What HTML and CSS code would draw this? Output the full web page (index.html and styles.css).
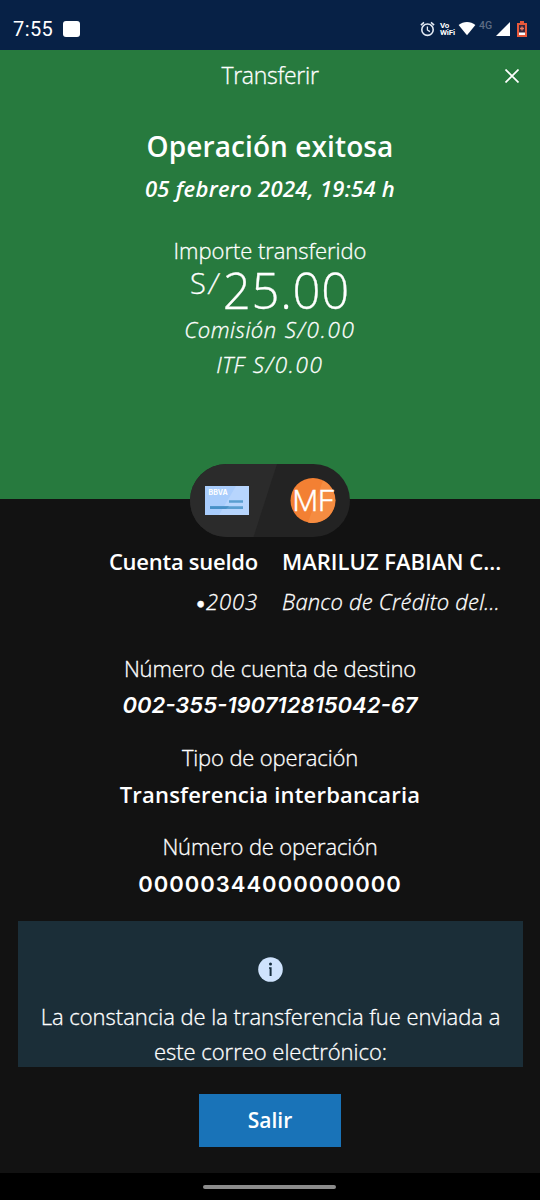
FILE: index.html
```html
<!DOCTYPE html>
<html lang="es">
<head>
<meta charset="utf-8">
<title>Transferir</title>
<link rel="stylesheet" href="styles.css">
</head>
<body>
<div class="screen">
  <div class="status">
    <span class="clock">7:55</span>
    <span class="notif"></span>
    <svg class="alarm" width="15" height="16" viewBox="0 0 15 16" fill="none" stroke="#e4ebf5">
      <circle cx="7.5" cy="8.7" r="5.7" stroke-width="1.6"/>
      <path d="M7.4 5.4V9l2.5 1.6" stroke-width="1.3"/>
      <path d="M.9 4.1 4 1.4M14.1 4.1 11 1.4" stroke-width="1.6"/>
    </svg>
    <span class="vowifi"><span>Vo</span><span>WiFi</span></span>
    <svg class="wifi" width="18" height="15" viewBox="0 0 18 15"><path d="M.6 4.1C5.4-.2 12.600-.2 17.400 4.100L9 14.200Z" fill="#fff"/></svg>
    <span class="net">4G</span>
    <svg class="signal" width="14" height="14" viewBox="0 0 14 14"><path d="M14 0v14H0z" fill="#fff"/></svg>
    <svg class="battery" width="10" height="16" viewBox="0 0 10 16">
      <path d="M3 0h4v2h3v14H0V2h3z" fill="#e8593b"/>
      <path d="M2 4h6v10H2z" fill="#38283d"/>
      <path d="M2 11.500h6V14H2z" fill="#fff"/>
      <path d="M5 5.500v4M3 7.500h4" stroke="#ef7b62" stroke-width="1.300"/>
    </svg>
  </div>

  <div class="hero">
    <div class="bar">
      <span></span>
      <span class="title">Transferir</span>
      <svg class="close" width="14" height="14" viewBox="0 0 14 14"><path d="m.5.5 13 13M13.500.5.5 13.500" stroke="#fff" stroke-width="1.700"/></svg>
    </div>
    <div class="success">Operación exitosa</div>
    <div class="date">05 febrero 2024, 19:54 h</div>
    <div class="label amount-label">Importe transferido</div>
    <div class="amount"><span class="currency">S<span class="slash">/</span></span><span class="value">25.00</span></div>
    <div class="fee"><span class="word">Comisión</span><span class="money">S/0.00</span></div>
    <div class="fee"><span class="word">ITF</span><span class="money">S/0.00</span></div>
  </div>

  <div class="pill">
    <svg width="160" height="73" viewBox="0 0 160 73">
      <rect width="160" height="73" rx="36.500" fill="#232323"/>
      <path d="M36.500 0H87L63.500 73h-27a36.500 36.500 0 0 1 0-73z" fill="#2b2b2b"/>
      <path d="M15 22h44v29H15z" fill="#a9cdfc"/>
      <path d="M46 22h13v29H29z" fill="#b7d5fd"/>
      <path d="M39 36.300h14v2.500H39zM20 42.200h33V45H20z" fill="#5a9ed0"/>
      <path d="M20 42.200h19L36 45H20z" fill="#4790c7"/>
      <circle cx="123" cy="36.500" r="22.500" fill="#f38033"/>
      <path d="M133 16.400a22.500 22.500 0 0 1-15 42z" fill="#f58c41"/>
      <text class="brand" x="18.500" y="31">BBVA</text>
      <text class="initials" x="123.500" y="46.500">MF</text>
    </svg>
  </div>

  <div class="parties">
    <div class="from">
      <div class="name">Cuenta sueldo</div>
      <div class="detail"><span class="dot">•</span>2003</div>
    </div>
    <div class="to">
      <div class="name">MARILUZ FABIAN C...</div>
      <div class="detail">Banco de Crédito del...</div>
    </div>
  </div>

  <div class="facts">
    <div class="fact">
      <div class="label tight">Número de cuenta de destino</div>
      <div class="data account">002-355-190712815042-67</div>
    </div>
    <div class="fact">
      <div class="label tight">Tipo de operación</div>
      <div class="data">Transferencia interbancaria</div>
    </div>
    <div class="fact">
      <div class="label tight">Número de operación</div>
      <div class="data digits">00000344000000000</div>
    </div>
  </div>

  <div class="notice">
    <svg width="25" height="25" viewBox="0 0 25 25"><circle cx="12.500" cy="12.500" r="12.300" fill="#cfe3fd"/><circle cx="12.500" cy="6.900" r="1.500" fill="#152c3c"/><path d="M11 10.200h2.600V19h-2v-7.200H11z" fill="#152c3c"/></svg>
    <div class="label">La constancia de la transferencia fue enviada a<br>este correo electrónico:</div>
  </div>

  <div class="actions"><button class="exit">Salir</button></div>
  <div class="nav"><span class="handle"></span></div>
</div>
</body>
</html>
```

FILE: styles.css
```css
* { box-sizing: border-box; }

body {
  margin: 0;
  background: #121212;
  color: #fff;
  font: 300 22px/36px "Open Sans", sans-serif;
}

.screen {
  display: flex;
  flex-direction: column;
  width: 540px;
  height: 1200px;
  overflow: hidden;
  white-space: nowrap;
}

/* Slightly heavier strokes for the light weight */
.title, .label, .amount, .fee, .detail { -webkit-text-stroke: .3px #fff; }

/* Status bar */
.status {
  display: flex;
  align-items: center;
  flex: none;
  height: 50px;
  padding: 7px 13px 0 13px;
  background: #072146;
}
.clock { width: 41px; font: 400 20px/24px Roboto, sans-serif; letter-spacing: .4px; }
.notif { width: 17px; height: 16px; margin-left: 9px; border-radius: 3px; background: #fff; }
.alarm { margin-left: auto; }
.vowifi {
  display: flex;
  flex-direction: column;
  width: 15px;
  margin-left: 5px;
  font: 700 8px/7px Roboto, sans-serif;
  letter-spacing: -.2px;
}
.wifi { margin-left: 3px; }
.net { width: 14px; margin: -6px 0 0 3px; font: 500 10.5px/12px Roboto, sans-serif; color: #5d6c84; }
.signal { margin-left: 3px; }
.battery { margin-left: 7px; }

/* Result header */
.hero { flex: none; height: 449px; background: #277a3e; text-align: center; }
.bar {
  display: grid;
  grid-template-columns: 40px 1fr 40px;
  align-items: center;
  justify-items: center;
  height: 50px;
}
.title { font-size: 23px; letter-spacing: -.3px; }
.close { margin-left: -16px; margin-top: 2px; }
.success { margin-top: 28px; font-size: 28px; font-weight: 600; letter-spacing: .1px; }
.date { margin-top: 6px; font-weight: 600; font-style: italic; letter-spacing: .3px; }
.amount-label { margin-top: 26px; letter-spacing: -.05px; }
.amount {
  display: flex;
  justify-content: center;
  height: 44px;
}
.currency { font-size: 29px; line-height: 30px; }
.slash { display: inline-block; margin: 0 4px 0 3px; transform: skewX(-9deg); }
.value { font-size: 49px; line-height: 45px; letter-spacing: .7px; }
.fee {
  display: flex;
  justify-content: center;
  gap: 8px;
  height: 34.500px;
  line-height: 35px;
  font-style: italic;
}
.word { letter-spacing: .5px; }
.money { font-size: 22.5px; letter-spacing: 1.7px; }

/* Source and destination badge, straddling the header edge */
.pill { flex: none; height: 73px; margin: -35px auto -38px; }
.pill svg { display: block; }
.brand { font: 700 7px Inter, sans-serif; fill: #fff; }
.initials { font: 300 29.5px Roboto, sans-serif; fill: #fff; stroke: #fff; stroke-width: .4px; text-anchor: middle; }

.parties {
  display: grid;
  grid-template-columns: 258px 1fr;
  column-gap: 24px;
  margin-top: 44px;
}
.from { text-align: right; }
.from .name { letter-spacing: -.25px; }
.name { font-weight: 600; }
.detail { margin-top: 4px; font-style: italic; letter-spacing: .2px; }
.from .detail { letter-spacing: .9px; }
.dot { font-family: Inter, sans-serif; font-style: normal; font-weight: 500; font-size: 20px; letter-spacing: 0; }

.facts {
  display: flex;
  flex-direction: column;
  gap: 17px;
  margin-top: 29px;
  text-align: center;
}
.tight { letter-spacing: -.15px; }
.data { position: relative; top: 1px; font-weight: 600; letter-spacing: .2px; }
.account { font-family: Inter, sans-serif; font-style: italic; letter-spacing: 0; }
.digits { top: 2px; font-family: Inter, sans-serif; letter-spacing: 1px; }

.notice {
  flex: none;
  height: 146px;
  margin: 21px 17px 0 18px;
  padding-top: 36px;
  overflow: hidden;
  background: #1b2e38;
  text-align: center;
}
.notice svg { display: block; margin: 0 auto 17px; }
.notice .label { line-height: 35px; letter-spacing: -.02px; }

.actions { display: flex; justify-content: center; flex: none; padding-top: 27px; }
.exit {
  width: 142px;
  height: 53px;
  padding: 0 0 2px;
  border: 0;
  background: #1973b8;
  color: #fff;
  font: 600 21px/50px "Open Sans", sans-serif;
}

.nav {
  display: flex;
  justify-content: center;
  flex: none;
  height: 27px;
  margin-top: auto;
  padding: 12px 1px 0 0;
  background: #000;
}
.handle { width: 133px; height: 4px; border-radius: 2px; background: #8c8c8c; }
```
